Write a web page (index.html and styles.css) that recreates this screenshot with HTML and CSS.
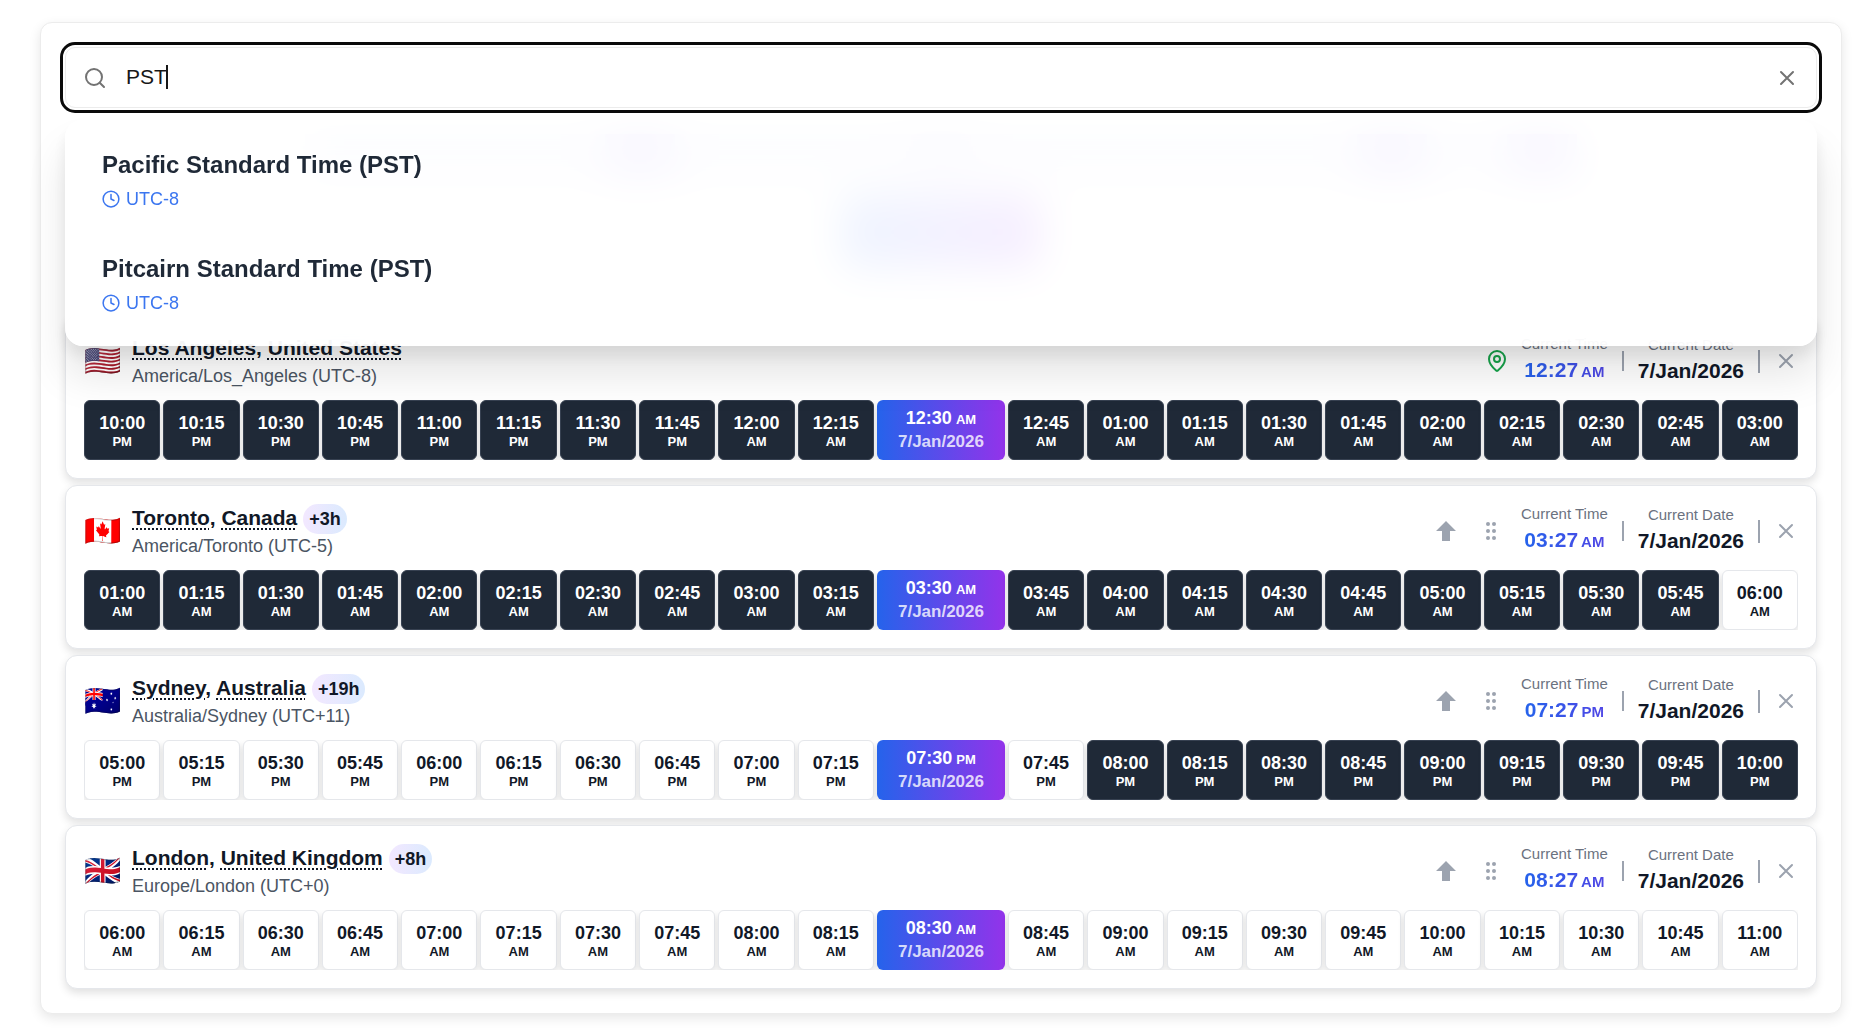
FILE: index.html
```
<!DOCTYPE html>
<html lang="en">
<head>
    <meta charset="UTF-8">
    <meta name="viewport" content="width=device-width, initial-scale=1.0">
    <title>Time Zone Converter</title>
    <link rel="stylesheet" href="styles.css">
</head>
<body>
    <svg class="sprite" aria-hidden="true">
        <symbol id="search" viewBox="0 0 24 24"><circle cx="11" cy="11" r="8"/><path d="m21 21-4.300-4.300"/></symbol>
        <symbol id="x" viewBox="0 0 24 24"><path d="M18 6 6 18M6 6l12 12"/></symbol>
        <symbol id="clock" viewBox="0 0 24 24"><circle cx="12" cy="12" r="10.5"/><path d="M12 6v6l4 2"/></symbol>
        <symbol id="pin" viewBox="0 0 24 24"><path d="M20 10c0 5-5.500 10.200-7.400 11.800a1 1 0 0 1-1.200 0C9.500 20.200 4 15 4 10a8 8 0 0 1 16 0"/><circle cx="12" cy="10" r="3"/></symbol>
        <symbol id="up" viewBox="0 0 24 24"><path d="M12 2 2 12h6v10h8V12h6z"/></symbol>
        <symbol id="grip" viewBox="0 0 24 24"><circle cx="9" cy="5" r="2"/><circle cx="15" cy="5" r="2"/><circle cx="9" cy="12" r="2"/><circle cx="15" cy="12" r="2"/><circle cx="9" cy="19" r="2"/><circle cx="15" cy="19" r="2"/></symbol>
    </svg>

    <main class="panel">
        <form class="search" name="search">
            <div class="search-box">
                <svg class="icon"><use href="#search"/></svg>
                <label class="field">
                    <input type="text" name="zone" value="PST" aria-label="Search time zone" autocomplete="off" autofocus>
                    <i class="caret"></i>
                </label>
                <button type="reset" class="icon-btn" aria-label="Clear"><svg class="icon"><use href="#x"/></svg></button>
            </div>
            <div class="results">
                <button type="button" class="result">
                    <span class="result-name">Pacific Standard Time (PST)</span>
                    <span class="result-utc"><svg class="icon"><use href="#clock"/></svg>UTC-8</span>
                </button>
                <button type="button" class="result">
                    <span class="result-name">Pitcairn Standard Time (PST)</span>
                    <span class="result-utc"><svg class="icon"><use href="#clock"/></svg>UTC-8</span>
                </button>
            </div>
        </form>

        <div class="timeline">
            <div class="ruler"><i></i><i class="soft"></i><i></i><i></i></div>
            <div class="marker"></div>
        </div>

        <div class="cities"></div>
    </main>

    <script>
        const cities = [
            { flag: "🇺🇸", city: "Los Angeles", country: "United States", zone: "America/Los_Angeles (UTC-8)", now: "12:27", ampm: "AM", start: 22 },
            { flag: "🇨🇦", city: "Toronto", country: "Canada", zone: "America/Toronto (UTC-5)", diff: "+3h", now: "03:27", ampm: "AM", start: 1 },
            { flag: "🇦🇺", city: "Sydney", country: "Australia", zone: "Australia/Sydney (UTC+11)", diff: "+19h", now: "07:27", ampm: "PM", start: 17 },
            { flag: "🇬🇧", city: "London", country: "United Kingdom", zone: "Europe/London (UTC+0)", diff: "+8h", now: "08:27", ampm: "AM", start: 6 }
        ];
        const date = "7/Jan/2026";
        const pad = (n) => String(n).padStart(2, "0");
        const icon = (name) => `<svg class="icon icon-${name}"><use href="#${name}"/></svg>`;

        // 21 quarter hours, the middle one is selected
        function slots(start) {
            let html = "";
            for (let i = 0; i < 21; i++) {
                const min = (start * 60 + i * 15) % 1440;
                const hour = Math.floor(min / 60);
                const time = `${pad(hour % 12 || 12)}:${pad(min % 60)}`;
                const ampm = hour < 12 ? "AM" : "PM";
                if (i === 10) {
                    html += `<button class="slot selected"><span class="slot-time">${time}<small>${ampm}</small></span><span class="slot-date">${date}</span></button>`;
                } else {
                    const night = hour < 6 || hour >= 20 ? " night" : "";
                    html += `<button class="slot${night}"><span class="slot-time">${time}</span><small>${ampm}</small></button>`;
                }
            }
            return html;
        }

        document.querySelector(".cities").innerHTML = cities.map((c) => `
            <section class="card">
                <header class="card-head">
                    <span class="flag">${c.flag}</span>
                    <div class="place">
                        <div class="place-row">
                            <h2><a href="#">${c.city}</a>, <a href="#">${c.country}</a></h2>
                            ${c.diff ? `<span class="badge">${c.diff}</span>` : ""}
                        </div>
                        <p>${c.zone}</p>
                    </div>
                    <div class="tools">
                        ${c.diff
                            ? `<button class="tool" aria-label="Move up">${icon("up")}</button><button class="tool" aria-label="Drag">${icon("grip")}</button>`
                            : icon("pin")}
                    </div>
                    <div class="info">
                        <div class="stat"><span>Current Time</span><b class="now">${c.now}<small>${c.ampm}</small></b></div>
                        <i class="line"></i>
                        <div class="stat"><span>Current Date</span><b>${date}</b></div>
                        <i class="line tall"></i>
                        <button class="icon-btn" aria-label="Remove">${icon("x")}</button>
                    </div>
                </header>
                <div class="slots">${slots(c.start)}</div>
            </section>`).join("");
    </script>
</body>
</html>
```
FILE: styles.css
```
* {
    box-sizing: border-box;
}
body {
    margin: 0;
    padding: 22px 34px 22px 40px;
    background: #fff;
    color: #111827;
    font-family: "Liberation Sans", Arial, sans-serif;
}
button {
    font: inherit;
    color: inherit;
    border: 0;
    padding: 0;
    background: none;
    cursor: pointer;
}
.sprite {
    position: absolute;
    width: 0;
    height: 0;
}
.icon {
    display: block;
    flex: none;
    width: 24px;
    height: 24px;
    fill: none;
    stroke: currentColor;
    stroke-width: 2;
    stroke-linecap: round;
    stroke-linejoin: round;
}
.icon-btn {
    flex: none;
    color: #9ca3af;
}
.panel {
    padding: 24px;
    border: 1px solid #ececec;
    border-radius: 12px;
    background: #fff;
    box-shadow: 0 4px 12px rgba(0,0,0,0.1);
}

/* search */
.search {
    position: relative;
}
.search-box {
    display: flex;
    align-items: center;
    gap: 19px;
    height: 61px;
    padding: 0 17px;
    border: 1px solid #ececec;
    border-radius: 10px;
    outline: 3px solid #0a0a0a;
    outline-offset: 2px;
    color: #737373;
}
.field {
    display: flex;
    flex: 1;
    align-items: center;
    min-width: 0;
    padding-bottom: 2px;
}
.field input {
    field-sizing: content;
    padding: 0;
    border: 0;
    outline: 0;
    background: none;
    color: #171717;
    caret-color: transparent;
    font: 21px "Liberation Sans", Arial, sans-serif;
}
.caret {
    width: 2px;
    height: 24px;
    margin-left: -1px;
    background: #171717;
}
.search-box .icon-btn {
    color: #737373;
}
.results {
    position: absolute;
    z-index: 10;
    top: 73px;
    left: 0;
    right: 0;
    padding: 9px;
    border-radius: 18px;
    background: rgba(255,255,255,0.9);
    backdrop-filter: blur(20px);
    box-shadow: 0 30px 40px rgba(0,0,0,0.1), 0 10px 16px rgba(0,0,0,0.08);
}
.result {
    display: flex;
    flex-direction: column;
    gap: 7px;
    width: 100%;
    padding: 21px 28px 22px;
    text-align: left;
}
.result-name {
    font-size: 24px;
    line-height: 30px;
    font-weight: bold;
    color: #1f2937;
}
.result-utc {
    display: flex;
    align-items: center;
    gap: 6px;
    font-size: 18px;
    line-height: 24px;
    color: #3b76f0;
}
.result-utc .icon {
    width: 18px;
    height: 18px;
}

/* timeline under the search results */
.timeline {
    height: 207px;
    padding-top: 26px;
}
.ruler {
    display: grid;
    grid-template-columns: 300px 4fr 6fr 2fr 70px;
    height: 44px;
    margin: 0 240px;
    background: #e4e6fa;
}
.ruler i {
    width: 70px;
    background: #b9a8fb;
}
.ruler i:first-child {
    grid-column: 2;
}
.ruler .soft {
    background: #d5d3f7;
}
.marker {
    width: 200px;
    height: 74px;
    margin: 17px auto 0;
    border-radius: 12px;
    background: linear-gradient(to right, #5b93f7, #a855f7);
}

/* city cards */
.cities {
    display: flex;
    flex-direction: column;
    gap: 6px;
}
.card {
    padding: 18px;
    border: 1px solid #e5e7eb;
    border-radius: 12px;
    background: #fff;
    box-shadow: 0 4px 8px rgba(0,0,0,0.12);
}
.card-head {
    display: flex;
    align-items: center;
    margin-bottom: 12px;
}
.flag {
    width: 37px;
    margin-right: 11px;
    font-size: 30px;
    line-height: 36px;
}
.place-row {
    display: flex;
    align-items: flex-start;
    gap: 6px;
    height: 30px;
}
.place h2 {
    margin: 0;
    font-size: 21px;
    line-height: 28px;
}
.place h2 a {
    color: inherit;
    text-decoration: underline dotted 2px;
    text-underline-offset: 3px;
}
.place p {
    margin: 0;
    font-size: 18px;
    line-height: 24px;
    color: #4b5563;
}
.badge {
    padding: 0 6px;
    border-radius: 15px;
    font-size: 18px;
    line-height: 30px;
    font-weight: bold;
    background: linear-gradient(to right, #f3e8ff, #dbeafe);
}
.tools {
    display: flex;
    gap: 9px;
    margin-left: auto;
    margin-right: 12px;
}
.tool {
    display: flex;
    justify-content: center;
    width: 36px;
    color: #9ca3af;
}
.icon-pin {
    color: #16a34a;
}
.icon-up,
.icon-grip {
    fill: currentColor;
    stroke: none;
}
.info {
    display: flex;
    align-items: center;
    gap: 14px;
}
.stat {
    display: flex;
    flex-direction: column;
    align-items: center;
}
.stat span {
    font-size: 15px;
    line-height: 18px;
    color: #6b7280;
}
.stat b {
    font-size: 21px;
    line-height: 33px;
}
.stat .now {
    background: linear-gradient(to right, #2563eb, #4f46e5);
    -webkit-background-clip: text;
    background-clip: text;
    color: transparent;
}
.stat small {
    margin-left: 3px;
    font-size: 15px;
}
.line {
    width: 2px;
    height: 20px;
    background: #9ca3af;
}
.line.tall {
    height: 23px;
}

/* quarter hour slots */
.slots {
    display: flex;
    gap: 3px;
    overflow: hidden;
}
.slot {
    display: flex;
    flex: 1 1 0;
    flex-direction: column;
    align-items: center;
    justify-content: center;
    min-width: 0;
    height: 60px;
    border: 1px solid #e5e7eb;
    border-radius: 6px;
    background: #fff;
    box-shadow: 0 3px 6px rgba(0,0,0,0.12);
    font-size: 18px;
    line-height: 24px;
    font-weight: bold;
}
.slot small {
    font-size: 13px;
    line-height: 14px;
}
.slot.night {
    border-color: #374151;
    background: #1f2937;
    color: #fff;
}
.slot.selected {
    flex: 0 0 128px;
    border: 0;
    background: linear-gradient(to right, #2563eb, #9333ea);
    color: #fff;
}
.slot-time small {
    margin-left: 4px;
}
.slot-date {
    font-size: 17px;
    color: rgba(255,255,255,0.8);
}
```
